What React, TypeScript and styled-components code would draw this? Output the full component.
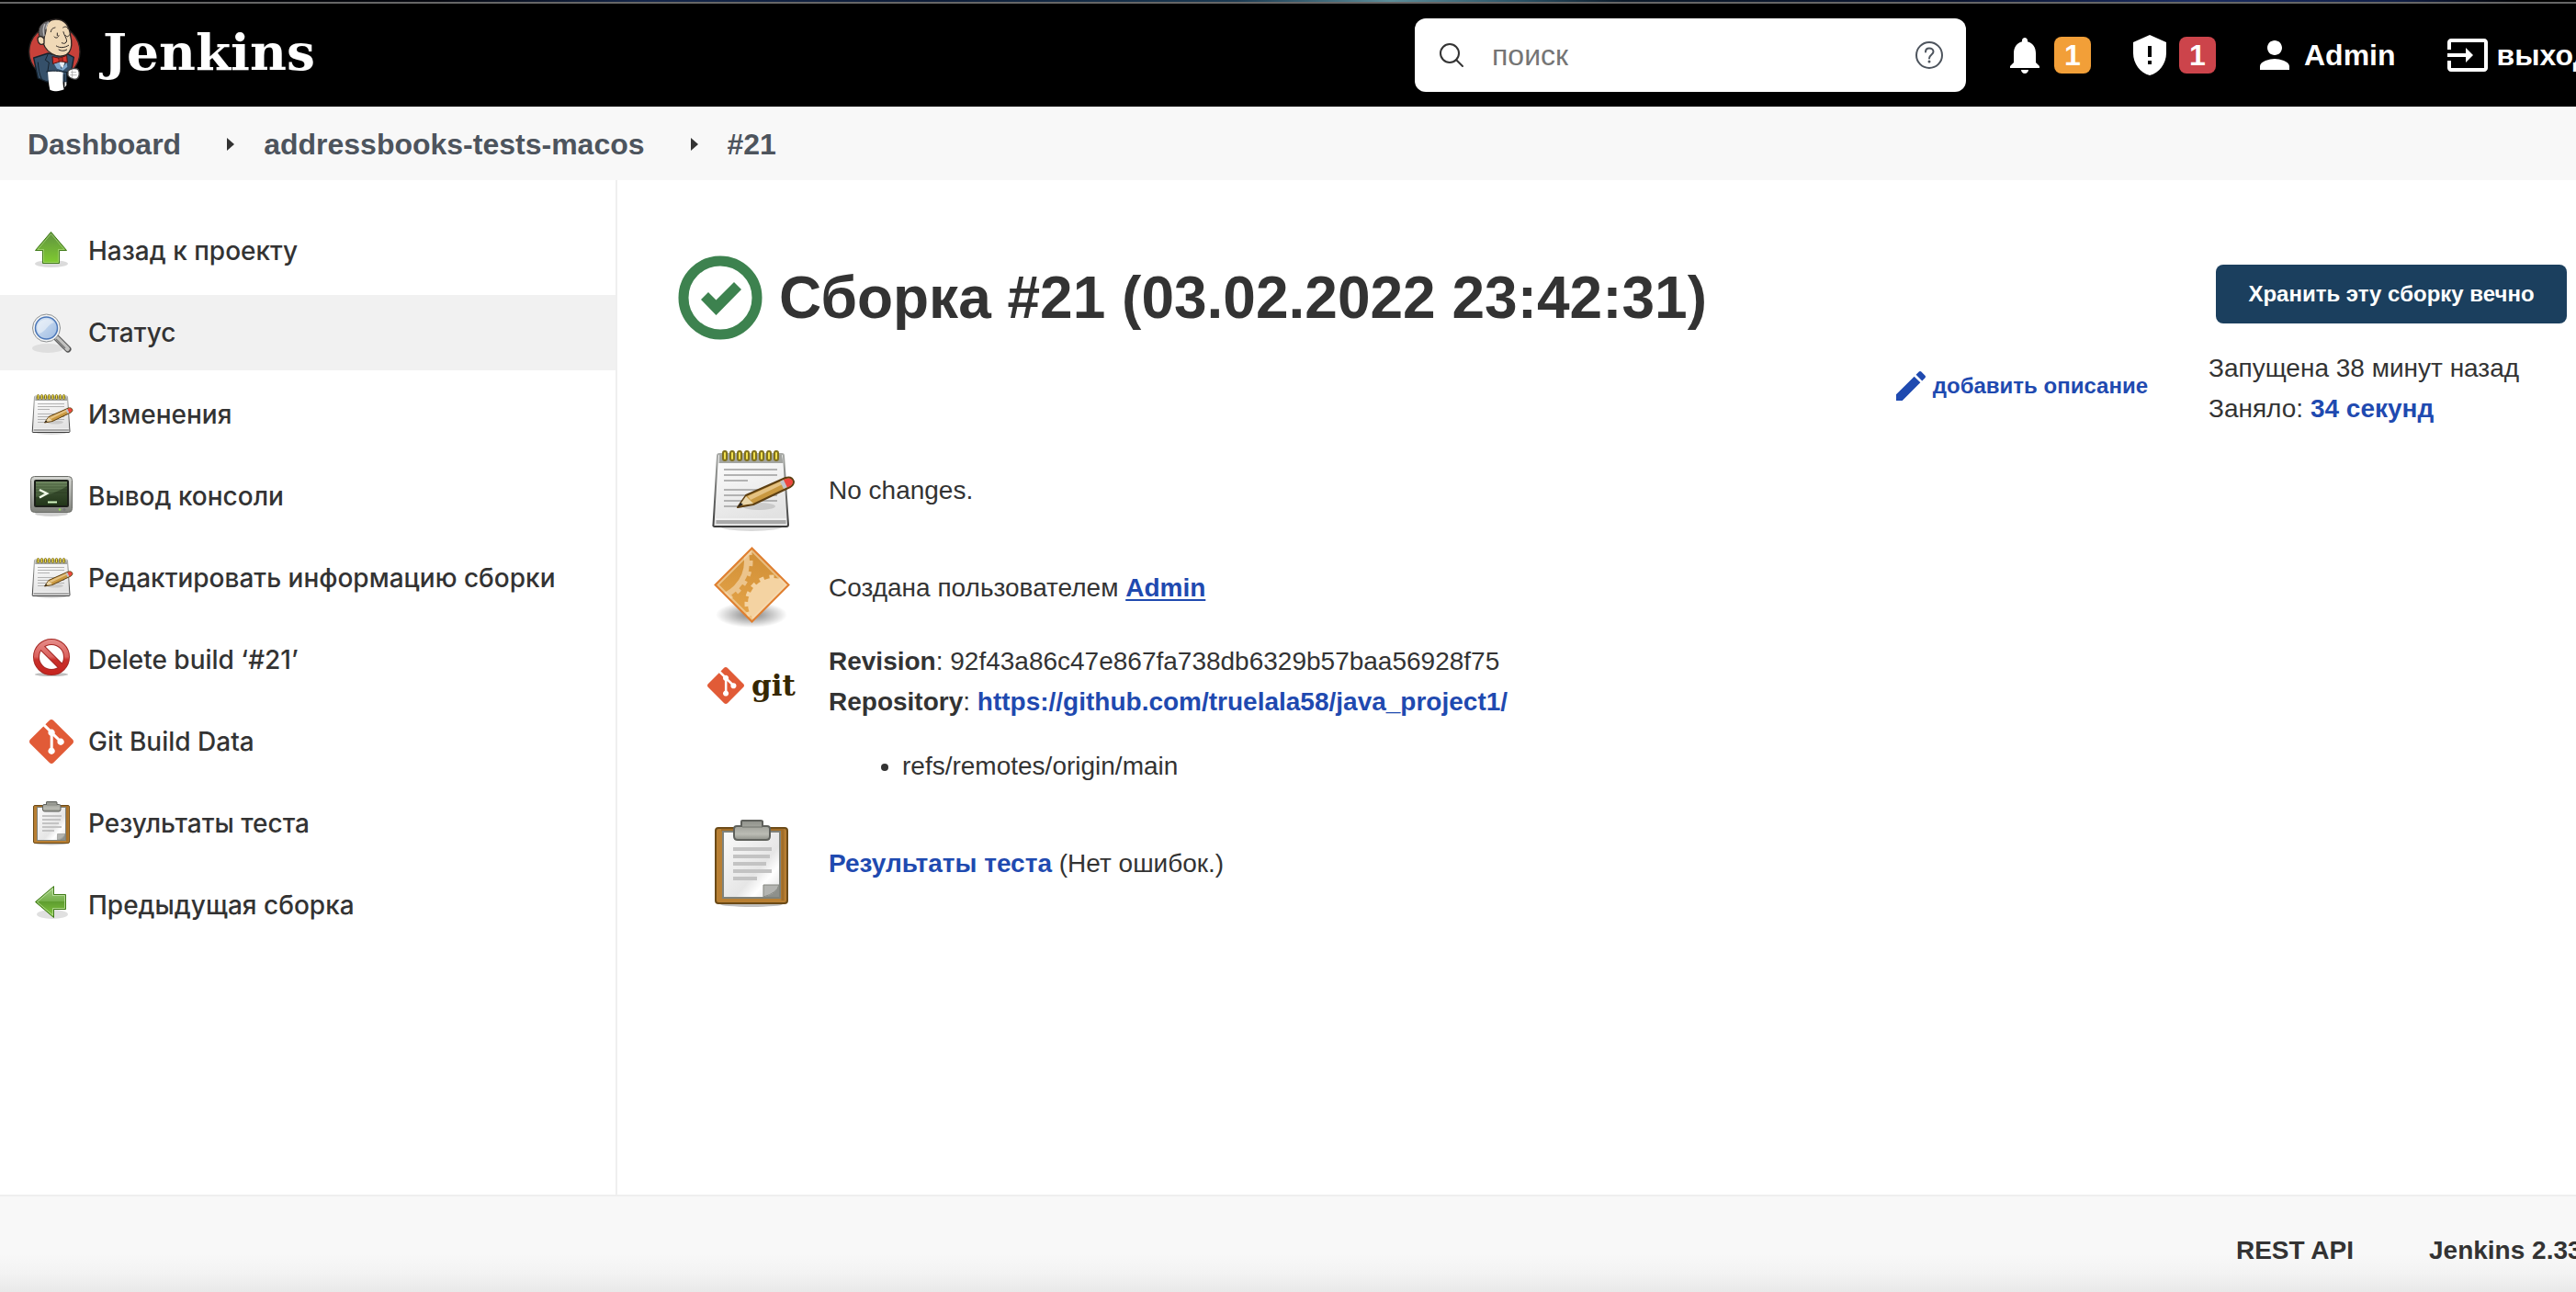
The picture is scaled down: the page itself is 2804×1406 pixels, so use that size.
import React from "react";
import styled, { createGlobalStyle, css } from "styled-components";
import { SiGit } from "react-icons/si";

const sans = `"Liberation Sans", Arial, Helvetica, sans-serif`;
const medium = `Inter, "Liberation Sans", sans-serif`;
const serif = `"DejaVu Serif", Georgia, serif`;
const color = {
  text: "#333333",
  muted: "#4d545d",
  link: "#1f4ab0",
  surface: "#f8f8f8",
  line: "#efefef",
  primary: "#1b3f5e",
};

const GlobalStyle = createGlobalStyle`
  *, *::before, *::after { box-sizing: border-box; }
  body {
    margin: 0;
    overflow-x: hidden;
    background: #fff;
    color: ${color.text};
    font-family: ${sans};
    font-size: 28px;
    line-height: 44px;
  }
  a { color: inherit; text-decoration: none; }
  svg { display: block; flex: none; }
`;

/* ---------- layout ---------- */

const Page = styled.div`
  display: flex;
  flex-direction: column;
  min-height: 100vh;
  overflow: hidden;
`;

const TopStrip = styled.div`
  height: 4px;
  border-bottom: 2px solid #666;
  background: linear-gradient(90deg, #000 0%, #05070f 17%, #14264a 25%, #0d1c38 36%, #1b3a52 48%,
    #5c8e9a 54%, #2a5266 59%, #0c1a2a 63%, #0a1430 76%, #1a2c60 85%, #101f48 93%, #000 98%);
`;

const Header = styled.header`
  display: flex;
  align-items: center;
  height: 112px;
  padding-left: 28px;
  background: #000;
  color: #fff;
`;

const Brand = styled.a`
  display: flex;
  align-items: flex-start;
  gap: 20px;
  margin-right: auto;
  font: bold 55px/78px ${serif};
`;

const SearchForm = styled.form`
  display: flex;
  align-items: center;
  flex: none;
  width: 600px;
  height: 80px;
  padding: 0 24px;
  gap: 28px;
  border-radius: 12px;
  background: #fff;
`;

const SearchInput = styled.input`
  flex: 1;
  min-width: 0;
  padding: 0;
  border: 0;
  outline: 0;
  background: none;
  color: ${color.text};
  font: 32px/40px ${sans};
  &::placeholder { color: #757575; opacity: 1; }
`;

const HeaderTools = styled.nav`
  display: flex;
  align-items: center;
  flex: none;
  width: 664px;
  padding-left: 40px;
  gap: 40px;
  font-size: 32px;
  font-weight: bold;
  white-space: nowrap;
`;

const ToolLink = styled.a`
  display: flex;
  align-items: center;
  gap: 8px;
`;

const UserLink = styled(ToolLink)`
  margin-right: 14px;
`;

const Badge = styled.span<{ $tone: string }>`
  width: 40px;
  border-radius: 8px;
  background: ${(p) => p.$tone};
  line-height: 40px;
  text-align: center;
`;

const Crumbs = styled.nav`
  height: 80px;
  padding: 0 30px;
  background: ${color.surface};
  color: ${color.muted};
  font-size: 32px;
  font-weight: bold;
  line-height: 82px;
`;

const CrumbList = styled.ol`
  display: flex;
  margin: 0;
  padding: 0;
  list-style: none;
`;

const Crumb = styled.li`
  display: flex;
  align-items: center;
  & + &::before {
    content: "";
    margin: 0 32px 0 50px;
    border: 7px solid transparent;
    border-right: 0;
    border-left: 8px solid ${color.text};
  }
`;

const Body = styled.div`
  display: flex;
  flex: 1;
`;

const Sidebar = styled.nav`
  flex: none;
  width: 672px;
  padding: 36px 0;
  border-right: 2px solid ${color.line};
`;

const TaskList = styled.ul`
  display: flex;
  flex-direction: column;
  gap: 7px;
  margin: 0;
  padding: 0;
  list-style: none;
`;

const TaskLink = styled.a<{ $active?: boolean }>`
  display: flex;
  align-items: center;
  gap: 16px;
  height: 82px;
  padding: 0 32px;
  font-family: ${medium};
  font-weight: 500;
  white-space: nowrap;
  ${(p) => p.$active && css`background: #f1f1f1;`}
`;

const Main = styled.main`
  display: flex;
  flex: 1;
  min-width: 0;
  gap: 66px;
  padding: 80px 10px 80px 64px;
`;

const Details = styled.div`
  flex: 1;
  min-width: 0;
`;

const Title = styled.h1`
  display: flex;
  align-items: center;
  gap: 16px;
  height: 96px;
  margin: 0;
  font-size: 64px;
  line-height: 96px;
`;

const DescriptionBar = styled.div`
  display: flex;
  justify-content: flex-end;
  padding: 26px 0 44px;
`;

const EditLink = styled.a`
  display: flex;
  align-items: center;
  gap: 8px;
  color: ${color.link};
  font-size: 24px;
  font-weight: bold;
`;

const Facts = styled.ul`
  display: flex;
  flex-direction: column;
  gap: 10px;
  margin: 0;
  padding: 0 0 0 34px;
  list-style: none;
`;

const Fact = styled.li`
  display: flex;
  gap: 36px;
  align-items: center;
`;

const TopFact = styled(Fact)`
  align-items: flex-start;
`;

const GitMark = styled.div`
  display: flex;
  align-items: center;
  gap: 8px;
  width: 96px;
  height: 96px;
  color: #362701;
  font: bold 31px/40px ${serif};
`;

const Branches = styled.ul`
  margin: 26px 0;
  padding-left: 80px;
  list-style: disc;
`;

const Link = styled.a<{ $underlined?: boolean }>`
  color: ${color.link};
  font-weight: bold;
  ${(p) => p.$underlined && css`
    text-decoration: underline;
    text-decoration-thickness: 2px;
    text-underline-offset: 3px;
  `}
`;

const Aside = styled.aside`
  flex: none;
  width: 390px;
  padding-top: 12px;
`;

const KeepButton = styled.button`
  display: block;
  width: 382px;
  height: 64px;
  margin: 0 0 27px auto;
  padding: 0;
  border: 0;
  border-radius: 8px;
  background: ${color.primary};
  color: #fff;
  font: bold 24px/64px ${sans};
`;

const Footer = styled.footer`
  display: flex;
  justify-content: flex-end;
  height: 106px;
  border-top: 2px solid ${color.line};
  background: linear-gradient(180deg, ${color.surface} 60%, #f3f3f3 80%, #e9e9e9 100%);
  font-weight: bold;
  line-height: 118px;
  white-space: nowrap;
`;

const FooterLink = styled.a`
  flex: none;
  margin-right: 82px;
`;

const Version = styled.a`
  flex: none;
  width: 160px;
`;

/* ---------- icons ---------- */

const Butler = () => (
  <svg width="64" height="84" viewBox="24 18 192 252" strokeLinejoin="round" strokeLinecap="round">
    <ellipse cx="118" cy="133" rx="83" ry="85" fill="#c8413a" stroke="#2a2422" strokeWidth="4" />
    <path d="M50 153 L97 138 L112 141 L160 140 L181 151 L173 196 L158 203 L158 232 L98 228 L96 232 L64 219 Z" fill="#35506a" stroke="#15212c" strokeWidth="4" />
    <path d="M64 168 C66 190 68 206 76 222 M97 140 L88 160 L100 168 L96 196" fill="none" stroke="#15212c" strokeWidth="3" />
    <path d="M113 152 L158 150 L146 190 Z" fill="#e9eef3" stroke="#15212c" strokeWidth="2" />
    <path d="M116 172 L134 166 L140 190 L158 168 L160 182 L146 194 L126 188 Z" fill="#7fa7cc" />
    <path d="M81 104 C64 66 84 30 121 27 C150 26 166 46 170 80 C176 104 174 122 166 134 C158 146 138 150 122 145 C102 138 88 128 81 104 Z" fill="#f0d9b7" stroke="#2a2422" strokeWidth="4" />
    <path d="M69 84 C58 52 80 32 108 30 C90 42 92 50 90 66 L84 90 Z" fill="#6c6b6d" stroke="#2a2422" strokeWidth="3" />
    <path d="M86 44 C80 56 80 66 84 80 M98 38 C92 44 90 50 90 58" fill="none" stroke="#b9b9bb" strokeWidth="4" />
    <path d="M84 90 C72 76 60 84 64 97 C66 110 76 112 84 106 Z" fill="#f0d9b7" stroke="#2a2422" strokeWidth="4" />
    <path d="M106 68 C108 56 114 56 120 54 M146 54 C154 48 160 52 162 58" fill="none" stroke="#2a2422" strokeWidth="3" />
    <path d="M117 84 C122 90 130 88 132 80 M127 80 V72 M154 80 C160 86 164 84 166 78 M147 68 C150 82 162 94 156 102 C152 108 146 106 142 104" fill="none" stroke="#2a2422" strokeWidth="3" />
    <path d="M124 114 C136 122 152 120 164 112 M132 126 C142 132 152 130 158 126" fill="none" stroke="#2a2422" strokeWidth="3" />
    <path d="M112 149 L134 154 L158 145 L160 168 L138 164 L114 172 Z" fill="#d8372f" stroke="#561512" strokeWidth="3" />
    <path d="M132 153 L144 151 L145 165 L134 165 Z" fill="#b32a24" stroke="#561512" strokeWidth="2" />
    <path d="M162 196 C168 188 190 184 196 192 C202 204 198 218 190 222 C180 224 166 218 162 210 Z" fill="#fff" stroke="#444" strokeWidth="4" />
    <path d="M172 200 H188 M170 209 H190 M176 194 V218" stroke="#999" strokeWidth="2" />
    <path d="M96 199 C112 194 130 196 146 200 C144 226 146 244 149 256 C136 262 120 264 103 257 C98 236 98 216 96 199 Z" fill="#fff" />
    <path d="M92 198 C110 193 130 196 160 200 M150 208 V230" fill="none" stroke="#15212c" strokeWidth="3" />
    <path d="M151 232 H157 V242 L151 250 Z" fill="#eee" />
  </svg>
);

const SearchIcon = () => (
  <svg width="32" height="32" viewBox="0 0 32 32" fill="none" stroke="#333" strokeWidth="2" strokeLinecap="round">
    <circle cx="14" cy="14" r="10" />
    <path d="M21 21 L28 28" />
  </svg>
);

const HelpIcon = () => (
  <svg width="32" height="32" viewBox="0 0 32 32" fill="none" stroke="#4d545d" strokeWidth="2">
    <circle cx="16" cy="16" r="14" />
    <path d="M12 12.500 C12 10 13.500 8.500 16 8.500 C18.500 8.500 20.500 10 20.500 12.300 C20.500 15.500 16 15.500 16 19.500" strokeLinecap="round" />
    <circle cx="16" cy="23" r="1.500" fill="#4d545d" stroke="none" />
  </svg>
);

const Glyph = ({ d }: { d: string }) => (
  <svg width="48" height="48" viewBox="0 0 24 24" fill="currentColor" fillRule="evenodd">
    <path d={d} />
  </svg>
);

const BELL = "M12 22c1.100 0 2-.9 2-2h-4c0 1.100.89 2 2 2zm6-6v-5c0-3.070-1.640-5.640-4.500-6.320V4c0-.83-.67-1.500-1.500-1.500s-1.500.67-1.500 1.500v.68C7.630 5.360 6 7.920 6 11v5l-2 2v1h16v-1l-2-2z";
const SHIELD = "M12 1L3 5v6c0 5.550 3.840 10.740 9 12 5.160-1.260 9-6.450 9-12V5l-9-4zM11 7h2v6h-2zM11 15h2v2h-2z";
const PERSON = "M12 12c2.210 0 4-1.790 4-4s-1.790-4-4-4-4 1.790-4 4 1.790 4 4 4zm0 2c-2.670 0-8 1.340-8 4v2h16v-2c0-2.660-5.330-4-8-4z";
const EXIT = "M21 3.010H3c-1.100 0-2 .9-2 2V9h2V4.990h18v14.030H3V15H1v4.010c0 1.100.9 1.980 2 1.980h18c1.100 0 2-.88 2-1.980v-14c0-1.110-.9-2-2-2zM11 16l4-4-4-4v3H1v2h10v3z";

const Pencil = () => (
  <svg width="32" height="32" viewBox="3 3 18 18" fill="currentColor">
    <path d="M3 17.250V21h3.750L17.810 9.940l-3.750-3.750L3 17.250zM20.710 7.040c.39-.39.39-1.020 0-1.410l-2.340-2.340c-.39-.39-1.020-.39-1.410 0l-1.830 1.830 3.750 3.750 1.830-1.830z" />
  </svg>
);

const Success = () => (
  <svg width="96" height="96" viewBox="0 0 96 96" fill="#3d824f">
    <circle cx="48" cy="48" r="40" fill="none" stroke="#3d824f" strokeWidth="11" />
    <path d="M27 50 L35 42 L43.500 50.500 L63 31 L71 39 L43.500 67 Z" />
  </svg>
);

const ArrowUp = () => (
  <svg width="48" height="48" viewBox="0 0 48 48">
    <defs>
      <linearGradient id="upFill" x1="0" y1="0" x2="0" y2="1">
        <stop offset="0" stopColor="#5f9140" />
        <stop offset="1" stopColor="#80cc30" />
      </linearGradient>
    </defs>
    <ellipse cx="24" cy="38" rx="18" ry="4" fill="#000" opacity="0.14" />
    <path d="M23.500 3.500 L40.500 23.500 H32.500 V37.500 H14.500 V23.500 H6.500 Z" fill="url(#upFill)" stroke="#3f7a17" strokeLinejoin="round" />
    <path d="M23.500 5.500 L38 22.500 H31.500 V36.500 H15.500 V22.500 H9 Z" fill="none" stroke="#b8e08a" strokeOpacity="0.6" />
  </svg>
);

const ArrowLeft = () => (
  <svg width="48" height="48" viewBox="0 0 48 48">
    <defs>
      <linearGradient id="leftFill" x1="0" y1="0" x2="0" y2="1">
        <stop offset="0" stopColor="#a5d088" />
        <stop offset="0.480" stopColor="#75b04a" />
        <stop offset="0.500" stopColor="#5f9e30" />
        <stop offset="1" stopColor="#84c940" />
      </linearGradient>
    </defs>
    <ellipse cx="25" cy="34" rx="17" ry="5" fill="#000" opacity="0.120" />
    <path d="M26.500 3.500 V12.500 H39.500 V28.500 H26.500 V37.500 L6.500 20.500 Z" fill="url(#leftFill)" stroke="#3f7a17" strokeLinejoin="round" />
    <path d="M25.500 6 V13.500 H38.500 V27.500 H25.500 V35 L8.500 20.500 Z" fill="none" stroke="#d3efba" strokeOpacity="0.6" />
  </svg>
);

const Magnifier = () => (
  <svg width="48" height="48" viewBox="0 0 48 48">
    <defs>
      <linearGradient id="lens" x1="0" y1="0" x2="1" y2="1">
        <stop offset="0" stopColor="#dbe7f5" />
        <stop offset="1" stopColor="#9dbbe2" />
      </linearGradient>
    </defs>
    <ellipse cx="20" cy="41" rx="17" ry="5" fill="#000" opacity="0.080" />
    <path d="M29 29 L42 42" stroke="#555" strokeWidth="7" strokeLinecap="round" />
    <path d="M30 30 L41.500 41.500" stroke="#c2c2c0" strokeWidth="5" strokeLinecap="round" />
    <path d="M29 31 L39 41" stroke="#777" strokeWidth="1.500" />
    <circle cx="18.500" cy="19" r="15" fill="#f4f5f5" stroke="#8d9091" />
    <circle cx="18.500" cy="19" r="12" fill="url(#lens)" stroke="#4a76b8" strokeWidth="1.500" />
    <path d="M8.500 20 A10.500 10.500 0 0 1 27 13 C20 14 18 24 10 25 Z" fill="#fff" opacity="0.450" />
  </svg>
);

const Notepad = ({ size }: { size: number }) => (
  <svg width={size} height={size} viewBox="0 0 96 96">
    <defs>
      <linearGradient id="sheet" x1="0" y1="0" x2="0.300" y2="1">
        <stop offset="0" stopColor="#fff" />
        <stop offset="1" stopColor="#e2e2e2" />
      </linearGradient>
      <linearGradient id="edge" x1="0" y1="0" x2="0" y2="1">
        <stop offset="0" stopColor="#a9aba8" />
        <stop offset="1" stopColor="#3c3c3c" />
      </linearGradient>
    </defs>
    <ellipse cx="48" cy="87" rx="34" ry="5" fill="#000" opacity="0.150" />
    <path d="M13 8 H81 Q83 8 83 10 L88 85 Q88 87 86 87 H8 Q6 87 6.500 85 L11 10 Q11 8 13 8 Z" fill="url(#sheet)" stroke="url(#edge)" strokeWidth="2" />
    <path d="M13 9 H81 L82.500 18 H12.500 Z" fill="#a3a5a1" />
    <path d="M9.500 80 H85.500 V84 H9.500 Z" fill="#a9a9a9" />
    <path d="M9 79 H86" stroke="#fff" strokeWidth="1" />
    <path d="M18 25 H76 M18 31 H76 M18 37 H44 M18 47 H76 M18 53 H76 M18 59 H76 M18 65 H36" stroke="#b2b2b2" strokeWidth="2" />
    {[19, 27, 35, 43, 51, 59, 67, 75].map((x) => (
      <rect key={x} x={x - 2} y="5" width="4" height="10" rx="2" fill="#f1e04e" stroke="#81711c" strokeWidth="2" />
    ))}
    <ellipse cx="56" cy="65" rx="18" ry="4" fill="#000" opacity="0.120" />
    <path d="M33 66 L42 53 L85 34 Q92 32 94 38 Q94 42 90 44 L50 63 Z" fill="#c99840" stroke="#5d3f12" strokeWidth="2" strokeLinejoin="round" />
    <path d="M44 54 L82 37 L84 40 L47 58 Z" fill="#e4c283" />
    <path d="M35 64 L42 54 L50 62 Z" fill="#ead7ac" />
    <path d="M33 66 L36 61 L39 63 Z" fill="#222" />
    <path d="M79 38 L83 36 L87 44 L83 46 Z" fill="#c0c4cc" />
    <path d="M83 36 Q91 32 93 38 Q93 42 87 44.500 Z" fill="#ee4640" />
  </svg>
);

const Console = () => (
  <svg width="48" height="48" viewBox="0 0 48 48">
    <defs>
      <linearGradient id="bezel" x1="0" y1="0" x2="0" y2="1">
        <stop offset="0" stopColor="#d5d6d2" />
        <stop offset="1" stopColor="#80827c" />
      </linearGradient>
      <linearGradient id="screen" x1="0" y1="0" x2="0" y2="1">
        <stop offset="0" stopColor="#6f8760" />
        <stop offset="1" stopColor="#2c4422" />
      </linearGradient>
    </defs>
    <ellipse cx="24" cy="43" rx="18" ry="3" fill="#000" opacity="0.180" />
    <rect x="1.500" y="2.500" width="45" height="39" rx="4" fill="url(#bezel)" stroke="#6a6c67" />
    <rect x="5" y="6" width="38" height="30" rx="2" fill="#1b1f19" />
    <rect x="7" y="8" width="34" height="26" fill="url(#screen)" />
    <path d="M7 11 H41 M7 14 H41 M7 17 H41 M7 20 H41" stroke="#24381c" opacity="0.400" />
    <path d="M7 34 V25 Q28 22 41 13 V34 Z" fill="#16260f" opacity="0.450" />
    <path d="M11 17 L19 21 L11 25.500" fill="none" stroke="#f2fbe9" strokeWidth="2.500" />
    <path d="M20 30.500 H30" stroke="#d4f7c3" strokeWidth="2" />
    <circle cx="33" cy="38.500" r="1.200" fill="#8fe04c" />
    <circle cx="38" cy="38.500" r="1.500" fill="#777" />
  </svg>
);

const NoEntry = () => (
  <svg width="48" height="48" viewBox="0 0 48 48">
    <defs>
      <linearGradient id="ban" x1="0" y1="0" x2="0" y2="48" gradientUnits="userSpaceOnUse">
        <stop offset="0.050" stopColor="#e58b88" />
        <stop offset="0.430" stopColor="#db625e" />
        <stop offset="0.500" stopColor="#c8302b" />
        <stop offset="0.900" stopColor="#c6211c" />
      </linearGradient>
    </defs>
    <ellipse cx="24" cy="40" rx="18" ry="2" fill="#000" opacity="0.250" />
    <g fill="none">
      <circle cx="24" cy="21" r="16.500" stroke="#a52824" strokeWidth="7" />
      <path d="M12.500 9.500 L35.500 32.500" stroke="#a52824" strokeWidth="7" />
      <circle cx="24" cy="21" r="16.500" stroke="url(#ban)" strokeWidth="5" />
      <path d="M12.500 9.500 L35.500 32.500" stroke="url(#ban)" strokeWidth="5" />
    </g>
  </svg>
);

const Clipboard = ({ size }: { size: number }) => (
  <svg width={size} height={size} viewBox="0 0 96 96">
    <defs>
      <linearGradient id="metal" x1="0" y1="0" x2="0" y2="1">
        <stop offset="0" stopColor="#8e9089" />
        <stop offset="0.700" stopColor="#bbbcb4" />
        <stop offset="1" stopColor="#8f9189" />
      </linearGradient>
      <linearGradient id="paper" x1="0" y1="0" x2="1" y2="1">
        <stop offset="0" stopColor="#fafafa" />
        <stop offset="0.600" stopColor="#e6e6e6" />
        <stop offset="0.750" stopColor="#fff" />
        <stop offset="1" stopColor="#ddd" />
      </linearGradient>
    </defs>
    <ellipse cx="48" cy="92" rx="34" ry="3" fill="#000" opacity="0.250" />
    <rect x="9" y="9" width="78" height="82" rx="3" fill="#b87f33" stroke="#6b4a17" strokeWidth="2" />
    <path d="M15 11 H82 V88" fill="none" stroke="#8a5c1e" strokeWidth="3" opacity="0.500" />
    <rect x="17" y="13" width="62" height="72" fill="url(#paper)" stroke="#7f827b" strokeWidth="2" />
    <path d="M61 84 V71 H78 Q76 80 61 84 Z" fill="#b3b4b1" stroke="#83857f" />
    <path d="M61 84 Q74 82 78 71 V84 Z" fill="#8e908b" />
    <path d="M28 32 H70 M28 40 H68 M28 48 H64 M28 56 H70 M28 64 H54" stroke="#c3c3c3" strokeWidth="4" />
    <path d="M37 8 V2 Q37 1 38 1 H58 Q60 1 60 2 V7 H65 Q68 7 68 10 V18 Q68 22 64 22 H33 Q29 22 29 18 V10 Q29 7 32 7 H37 Z" fill="url(#metal)" stroke="#5f615c" strokeWidth="2" />
    <path d="M38 8 H60" stroke="#70726c" strokeWidth="1" />
  </svg>
);

const Gears = () => (
  <svg width="96" height="96" viewBox="0 0 96 96">
    <defs>
      <radialGradient id="gearShadow">
        <stop offset="0" stopColor="#000" stopOpacity="0.500" />
        <stop offset="1" stopColor="#000" stopOpacity="0" />
      </radialGradient>
      <linearGradient id="amber" x1="0.500" y1="0" x2="0.300" y2="1">
        <stop offset="0" stopColor="#cf8d34" />
        <stop offset="1" stopColor="#e9a94e" />
      </linearGradient>
      <clipPath id="diamond">
        <path d="M48.500 5 L88 44.500 L48.500 84 L9 44.500 Z" />
      </clipPath>
    </defs>
    <ellipse cx="48" cy="77" rx="39" ry="14" fill="url(#gearShadow)" />
    <g clipPath="url(#diamond)">
      <rect width="96" height="96" fill="url(#amber)" />
      <circle cx="3" cy="19" r="40" fill="none" stroke="#ecc48c" strokeWidth="6" />
      <circle cx="3" cy="19" r="44" fill="none" stroke="#ecc48c" strokeWidth="5" strokeDasharray="5 6" />
      <circle cx="72" cy="65" r="28" fill="#f4d3a2" />
      <circle cx="72" cy="65" r="29" fill="none" stroke="#f4d3a2" strokeWidth="5" strokeDasharray="5 6" />
    </g>
    <path d="M48.500 7.500 L85.500 44.500 L48.500 81.500 L11.500 44.500 Z" fill="none" stroke="#f6dcb4" strokeWidth="2" opacity="0.600" />
    <path d="M48.500 4.500 L88.500 44.500 L48.500 84.500 L8.500 44.500 Z" fill="none" stroke="#e07f30" strokeWidth="2" />
  </svg>
);

/* ---------- page ---------- */

const tasks = [
  { label: "Назад к проекту", icon: <ArrowUp /> },
  { label: "Статус", icon: <Magnifier />, active: true },
  { label: "Изменения", icon: <Notepad size={48} /> },
  { label: "Вывод консоли", icon: <Console /> },
  { label: "Редактировать информацию сборки", icon: <Notepad size={48} /> },
  { label: "Delete build ‘#21’", icon: <NoEntry /> },
  { label: "Git Build Data", icon: <SiGit size={48} color="#e15b37" /> },
  { label: "Результаты теста", icon: <Clipboard size={48} /> },
  { label: "Предыдущая сборка", icon: <ArrowLeft /> },
];

const crumbs = ["Dashboard", "addressbooks-tests-macos", "#21"];

export default function App() {
  return (
    <Page>
      <GlobalStyle />
      <TopStrip />
      <Header>
        <Brand href="#">
          <Butler />
          Jenkins
        </Brand>
        <SearchForm role="search" onSubmit={(e) => e.preventDefault()}>
          <SearchIcon />
          <SearchInput type="text" placeholder="поиск" aria-label="поиск" />
          <a href="#" aria-label="Help">
            <HelpIcon />
          </a>
        </SearchForm>
        <HeaderTools>
          <ToolLink href="#">
            <Glyph d={BELL} />
            <Badge $tone="#f29f38">1</Badge>
          </ToolLink>
          <ToolLink href="#">
            <Glyph d={SHIELD} />
            <Badge $tone="#cc444b">1</Badge>
          </ToolLink>
          <UserLink href="#">
            <Glyph d={PERSON} />
            Admin
          </UserLink>
          <ToolLink href="#">
            <Glyph d={EXIT} />
            выход
          </ToolLink>
        </HeaderTools>
      </Header>
      <Crumbs aria-label="Breadcrumb">
        <CrumbList>
          {crumbs.map((label) => (
            <Crumb key={label}>
              <a href="#">{label}</a>
            </Crumb>
          ))}
        </CrumbList>
      </Crumbs>
      <Body>
        <Sidebar>
          <TaskList>
            {tasks.map((task) => (
              <li key={task.label}>
                <TaskLink href="#" $active={task.active}>
                  {task.icon}
                  {task.label}
                </TaskLink>
              </li>
            ))}
          </TaskList>
        </Sidebar>
        <Main>
          <Details>
            <Title>
              <Success />
              Сборка #21 (03.02.2022 23:42:31)
            </Title>
            <DescriptionBar>
              <EditLink href="#">
                <Pencil />
                добавить описание
              </EditLink>
            </DescriptionBar>
            <Facts>
              <Fact>
                <Notepad size={96} />
                <div>No changes.</div>
              </Fact>
              <Fact>
                <Gears />
                <div>
                  Создана пользователем <Link href="#" $underlined>Admin</Link>
                </div>
              </Fact>
              <TopFact>
                <GitMark>
                  <SiGit size={40} color="#e15b37" />
                  git
                </GitMark>
                <div>
                  <div>
                    <b>Revision</b>: 92f43a86c47e867fa738db6329b57baa56928f75
                  </div>
                  <div>
                    <b>Repository</b>: <Link href="#">https://github.com/truelala58/java_project1/</Link>
                  </div>
                  <Branches>
                    <li>refs/remotes/origin/main</li>
                  </Branches>
                </div>
              </TopFact>
              <Fact>
                <Clipboard size={96} />
                <div>
                  <Link href="#">Результаты теста</Link> (Нет ошибок.)
                </div>
              </Fact>
            </Facts>
          </Details>
          <Aside>
            <KeepButton type="button">Хранить эту сборку вечно</KeepButton>
            <div>Запущена 38 минут назад</div>
            <div>
              Заняло: <Link href="#">34 секунд</Link>
            </div>
          </Aside>
        </Main>
      </Body>
      <Footer>
        <FooterLink href="#">REST API</FooterLink>
        <Version href="#">Jenkins 2.332</Version>
      </Footer>
    </Page>
  );
}
